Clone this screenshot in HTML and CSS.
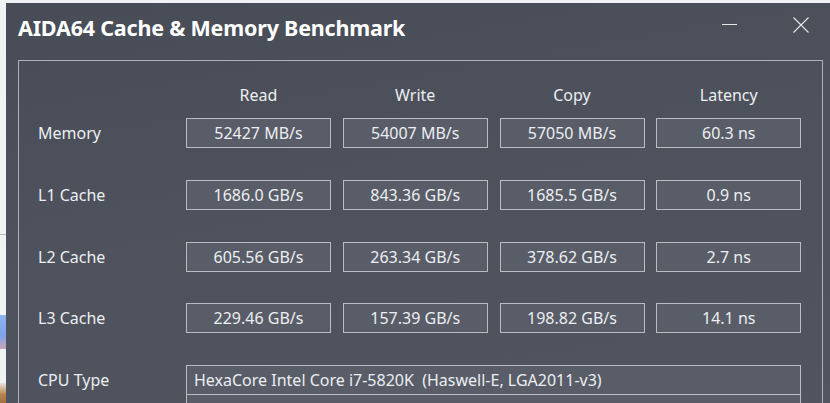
FILE: index.html
```html
<!DOCTYPE html>
<html lang="en">
<head>
<meta charset="utf-8">
<title>AIDA64 Cache &amp; Memory Benchmark</title>
<link rel="stylesheet" href="styles.css">
</head>
<body>
<div class="desktop">
  <div class="edge">
    <div class="edge-line"></div>
    <div class="edge-blue"></div>
    <div class="edge-brown"></div>
  </div>
  <div class="window">
    <div class="titlebar">
      <div class="title">AIDA64 Cache &amp; Memory Benchmark</div>
      <div class="controls">
        <button class="ctl" aria-label="Minimize">
          <svg width="15" height="15" viewBox="0 0 15 15"><line x1="0" y1="7.5" x2="15" y2="7.5" stroke="#e6e7ea" stroke-width="1"/></svg>
        </button>
        <button class="ctl" aria-label="Close">
          <svg width="16" height="16" viewBox="0 0 16 16"><path d="M0.5 0.5 L15.5 15.5 M15.5 0.5 L0.5 15.5" stroke="#e6e7ea" stroke-width="1.1" fill="none"/></svg>
        </button>
      </div>
    </div>
    <div class="frame">
      <div class="row head">
        <div></div>
        <div class="colhead">Read</div>
        <div class="colhead">Write</div>
        <div class="colhead">Copy</div>
        <div class="colhead">Latency</div>
      </div>
      <div class="row bench">
        <div class="label">Memory</div>
        <div class="val">52427 MB/s</div>
        <div class="val">54007 MB/s</div>
        <div class="val">57050 MB/s</div>
        <div class="val">60.3 ns</div>
      </div>
      <div class="row bench">
        <div class="label">L1 Cache</div>
        <div class="val">1686.0 GB/s</div>
        <div class="val">843.36 GB/s</div>
        <div class="val">1685.5 GB/s</div>
        <div class="val">0.9 ns</div>
      </div>
      <div class="row bench">
        <div class="label">L2 Cache</div>
        <div class="val">605.56 GB/s</div>
        <div class="val">263.34 GB/s</div>
        <div class="val">378.62 GB/s</div>
        <div class="val">2.7 ns</div>
      </div>
      <div class="row bench">
        <div class="label">L3 Cache</div>
        <div class="val">229.46 GB/s</div>
        <div class="val">157.39 GB/s</div>
        <div class="val">198.82 GB/s</div>
        <div class="val">14.1 ns</div>
      </div>
      <div class="row info first">
        <div class="label">CPU Type</div>
        <div class="val wide">HexaCore Intel Core i7-5820K &nbsp;(Haswell-E, LGA2011-v3)</div>
      </div>
      <div class="row info">
        <div class="label"></div>
        <div class="val wide"></div>
      </div>
    </div>
  </div>
</div>
</body>
</html>
```

FILE: styles.css
```css
* { box-sizing: border-box; }
html, body { margin: 0; padding: 0; }
body {
  background: #f1f2f4;
  font-family: "Noto Sans", "Open Sans", "DejaVu Sans", sans-serif;
  overflow: hidden;
  width: 830px;
  height: 403px;
}
.desktop {
  display: flex;
  padding-top: 3px;
  height: 403px;
}
.edge {
  position: relative;
  width: 6px;
  flex: none;
}
.edge-line {
  position: absolute; left: 0; top: 231px; width: 6px; height: 1px; background: #b8bac0;
}
.edge-blue {
  position: absolute; left: 0; top: 312px; width: 6px; height: 34px;
  background: linear-gradient(180deg, #8fb2f0 0%, #7fa3ea 60%, #c9a7b8 100%);
}
.edge-brown {
  position: absolute; left: 0; top: 380px; width: 6px; height: 23px;
  background: linear-gradient(180deg, #e9e4dc 0%, #b8844e 50%, #9a6a3a 100%);
}
.window {
  flex: none;
  width: 830px;
  height: 420px;
  background: linear-gradient(170deg, #474c57 0%, #4d525d 45%, #50555f 100%);
  color: #eceef1;
  padding: 0 0 0 12px;
}
.titlebar {
  height: 57px;
  display: flex;
  align-items: flex-start;
  justify-content: space-between;
}
.title {
  font-weight: 700;
  font-size: 21.5px;
  color: #ffffff;
  margin-top: 10px;
  letter-spacing: -0.2px;
}
.controls {
  display: flex;
  align-items: flex-start;
  gap: 56px;
  margin-right: 27px;
  margin-top: 14px;
}
.ctl {
  background: none;
  border: 0;
  padding: 0;
  display: flex;
}
.frame {
  width: 805px;
  height: 370px;
  border: 1px solid #aeb1b8;
  border-bottom: 0;
  padding: 22px 0 0 19px;
}
.row {
  display: grid;
  grid-template-columns: 136.25px repeat(4, 145px);
  column-gap: 11.75px;
  align-items: center;
}
.head { height: 24px; margin-bottom: 11px; }
.colhead {
  text-align: center;
  font-size: 16px;
  line-height: 24px;
}
.bench { height: 30px; }
.bench + .bench { margin-top: 31.75px; }
.info.first { margin-top: 31.75px; }
.info { height: 30px; }
.info + .info { margin-top: -1px; }
.label {
  font-size: 16px;
  line-height: 30px;
  white-space: nowrap;
}
.val {
  height: 30px;
  border: 1px solid #b9bcc2;
  background: #585d68;
  text-align: center;
  font-size: 16px;
  line-height: 28px;
  white-space: nowrap;
}
.val.wide {
  grid-column: 2 / span 4;
  text-align: left;
  padding-left: 7px;
}
```
